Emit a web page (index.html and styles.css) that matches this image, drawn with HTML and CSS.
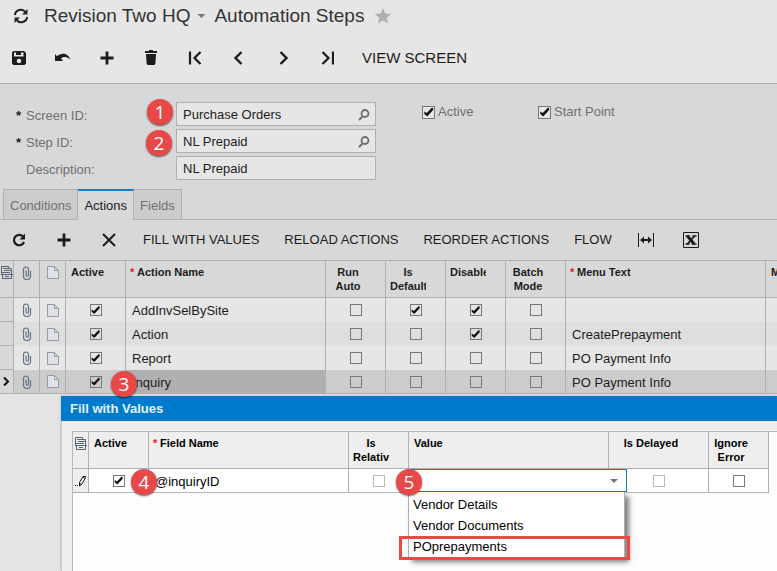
FILE: index.html
```html
<!DOCTYPE html>
<html lang="en">
<head>
    <meta charset="UTF-8">
    <meta name="viewport" content="width=device-width, initial-scale=1.0">
    <title>Automation Steps</title>
    <link rel="stylesheet" href="styles.css">
</head>
<body>

    <!-- Shared icons -->
    <svg class="sprite" aria-hidden="true">
        <symbol id="i-clip" viewBox="0 0 10 14">
            <path d="M1.500 3.500V10a3.500 3.500 0 0 0 7 0V5M1.500 4V3.500a2.500 2.500 0 0 1 5 0V9a1.200 1.200 0 0 1-2.400 0V4.500" fill="none" stroke="#667387" stroke-width="1.200"/>
        </symbol>
        <symbol id="i-page" viewBox="0 0 12 13">
            <path d="M.5.5h7l4 4v8H.5z" fill="#dfe2e8" stroke="#929aac"/>
            <path d="M7.500.5v4h4" fill="none" stroke="#929aac"/>
        </symbol>
        <symbol id="i-files" viewBox="0 0 12 14">
            <path d="M.5 8.500v-8h7v2h3v6zM1.500 8.500v4h9v-4" fill="none" stroke="#56647a"/>
            <path d="M2 2.500h6M3 4.500h8M0 6.500h4M4 6.500h5M0 8.500h12M4 10.500h4" stroke="#56647a"/>
        </symbol>
        <symbol id="i-search" viewBox="0 0 12 12">
            <circle cx="7" cy="4.500" r="3.500" fill="none" stroke="#6e6e6e" stroke-width="1.800"/>
            <path d="M4.500 7.500L1 11" stroke="#6e6e6e" stroke-width="2"/>
        </symbol>
        <symbol id="i-plus" viewBox="0 0 14 14">
            <path d="M7 .5v13M.5 7h13" stroke="#1c1c1c" stroke-width="2.800"/>
        </symbol>
    </svg>

    <header class="page-header">
        <div class="title-row">
            <button class="icon-button" aria-label="Refresh">
                <svg width="16" height="16" viewBox="0 0 16 16"><path d="M1.800 7A6 6 0 0 1 12.500 4.200M14.200 9A6 6 0 0 1 3.500 11.800" fill="none" stroke="#222" stroke-width="2"/><path d="M14.500 1v5.500H9zM1.500 15V9.500H7z" fill="#222"/></svg>
            </button>
            <button class="company">Revision Two HQ <span class="caret"></span></button>
            <h1>Automation Steps</h1>
            <button class="icon-button" aria-label="Favorite">
                <svg width="18" height="18" viewBox="0 0 18 18"><path d="M9 1l2.300 5.400 5.900.5-4.500 3.900 1.400 5.700L9 13.500l-5.100 3 1.400-5.700L.8 6.900l5.900-.5z" fill="#b0b0b0"/></svg>
            </button>
        </div>
        <div class="main-toolbar">
            <button class="icon-button" aria-label="Save">
                <svg width="14" height="14" viewBox="0 0 14 14"><path fill-rule="evenodd" d="M1.500 0H12l2 2v10.500L12.500 14h-11L0 12.500v-11zM2 1.500v4h9.500v-4H9V4H4V1.500zM7 7.700a2.300 2.300 0 1 0 0 4.600 2.300 2.300 0 0 0 0-4.600z" fill="#1c1c1c"/></svg>
            </button>
            <button class="icon-button" aria-label="Undo">
                <svg width="16" height="10" viewBox="0 0 16 10"><path d="M0 1l2 2.300C6-.3 13-.6 15.500 7c-2-2.800-6-4.500-9.500-1.500L8 8H0z" fill="#1c1c1c"/></svg>
            </button>
            <button class="icon-button" aria-label="Add">
                <svg width="14" height="14"><use href="#i-plus"/></svg>
            </button>
            <button class="icon-button" aria-label="Delete">
                <svg width="12" height="15" viewBox="0 0 12 15"><path d="M0 1h4V0h4v1h4v2H0zM1 4h10l-.6 9.500L9.500 15h-7l-.9-1.500z" fill="#1c1c1c"/></svg>
            </button>
            <button class="icon-button" aria-label="First">
                <svg width="14" height="14" viewBox="0 0 14 14"><path d="M2 .5v13M12.500 1L6.500 7l6 6" fill="none" stroke="#1c1c1c" stroke-width="2.200"/></svg>
            </button>
            <button class="icon-button" aria-label="Previous">
                <svg width="14" height="14" viewBox="0 0 14 14"><path d="M9.500 1l-6 6 6 6" fill="none" stroke="#1c1c1c" stroke-width="2.400"/></svg>
            </button>
            <button class="icon-button" aria-label="Next">
                <svg width="14" height="14" viewBox="0 0 14 14"><path d="M4.500 1l6 6-6 6" fill="none" stroke="#1c1c1c" stroke-width="2.400"/></svg>
            </button>
            <button class="icon-button" aria-label="Last">
                <svg width="14" height="14" viewBox="0 0 14 14"><path d="M13 .5v13M2.500 1l6 6-6 6" fill="none" stroke="#1c1c1c" stroke-width="2.200"/></svg>
            </button>
            <button class="text-button large">VIEW SCREEN</button>
        </div>
    </header>

    <main>
        <form class="step-form">
            <div class="fields">
                <label class="required" for="screen-id">Screen ID:</label>
                <div class="input-box">
                    <input type="text" id="screen-id" value="Purchase Orders">
                    <svg width="12" height="12"><use href="#i-search"/></svg>
                </div>
                <label class="required" for="step-id">Step ID:</label>
                <div class="input-box">
                    <input type="text" id="step-id" value="NL Prepaid">
                    <svg width="12" height="12"><use href="#i-search"/></svg>
                </div>
                <label for="description">Description:</label>
                <div class="input-box">
                    <input type="text" id="description" value="NL Prepaid">
                </div>
            </div>
            <div class="flags">
                <label><input type="checkbox" class="check big" checked>Active</label>
                <label><input type="checkbox" class="check big" checked>Start Point</label>
            </div>
        </form>

        <div class="tabs" role="tablist">
            <button class="tab" role="tab">Conditions</button>
            <button class="tab active" role="tab" aria-selected="true">Actions</button>
            <button class="tab" role="tab">Fields</button>
        </div>

        <div class="grid-toolbar">
            <button class="icon-button" aria-label="Refresh grid">
                <svg width="14" height="14" viewBox="0 0 14 14"><path d="M11 3.500A5.200 5.200 0 1 0 12 9" fill="none" stroke="#1c1c1c" stroke-width="2.200"/><path d="M13 .5v6H7.500z" fill="#1c1c1c"/></svg>
            </button>
            <button class="icon-button" aria-label="Add row">
                <svg width="14" height="14"><use href="#i-plus"/></svg>
            </button>
            <button class="icon-button" aria-label="Delete row">
                <svg width="14" height="14" viewBox="0 0 14 14"><path d="M1 1l12 12M13 1L1 13" stroke="#1c1c1c" stroke-width="2"/></svg>
            </button>
            <div class="text-buttons">
                <button class="text-button">FILL WITH VALUES</button>
                <button class="text-button">RELOAD ACTIONS</button>
                <button class="text-button">REORDER ACTIONS</button>
                <button class="text-button">FLOW</button>
            </div>
            <button class="icon-button" aria-label="Fit columns">
                <svg width="16" height="14" viewBox="0 0 16 14"><path d="M.5 0v14M15.500 0v14" stroke="#1c1c1c"/><path d="M4 7h8" stroke="#1c1c1c" stroke-width="2"/><path d="M2 7l4-3.500v7zM14 7l-4-3.500v7z" fill="#1c1c1c"/></svg>
            </button>
            <button class="icon-button" aria-label="Export to Excel">
                <svg width="16" height="16" viewBox="0 0 16 16"><path d="M.5.5h15v15H.5z" fill="none" stroke="#1c1c1c"/><path d="M4.500 4l6.500 8" stroke="#1c1c1c" stroke-width="3"/><path d="M11.500 4l-7 8" stroke="#1c1c1c" stroke-width="1.800"/><path d="M2.500 4h4M9.500 4h4M2.500 12h4M9 12h4.500" stroke="#1c1c1c" stroke-width="1.500"/></svg>
            </button>
        </div>

        <table class="grid">
            <colgroup>
                <col class="w-mark"><col class="w-icon"><col class="w-icon"><col class="w-check"><col class="w-text">
                <col class="w-check"><col class="w-check"><col class="w-check"><col class="w-check"><col class="w-text"><col>
            </colgroup>
            <thead>
                <tr>
                    <th class="icon-cell"><svg width="12" height="14"><use href="#i-files"/></svg></th>
                    <th class="icon-cell"><svg width="10" height="14"><use href="#i-clip"/></svg></th>
                    <th class="icon-cell"><svg width="12" height="13"><use href="#i-page"/></svg></th>
                    <th><div>Active</div></th>
                    <th><div class="required">Action Name</div></th>
                    <th class="center"><div>Run Auto</div></th>
                    <th class="center"><div>Is Default</div></th>
                    <th class="center"><div>Disabled</div></th>
                    <th class="center"><div>Batch Mode</div></th>
                    <th><div class="required">Menu Text</div></th>
                    <th class="cut"><div>M</div></th>
                </tr>
            </thead>
            <tbody>
                <tr>
                    <td class="mark"></td>
                    <td class="icon-cell"><svg width="10" height="14"><use href="#i-clip"/></svg></td>
                    <td class="icon-cell"><svg width="12" height="13"><use href="#i-page"/></svg></td>
                    <td class="center"><input type="checkbox" class="check" aria-label="Active" checked></td>
                    <td>AddInvSelBySite</td>
                    <td class="center"><input type="checkbox" class="check" aria-label="Run Auto"></td>
                    <td class="center"><input type="checkbox" class="check" aria-label="Is Default" checked></td>
                    <td class="center"><input type="checkbox" class="check" aria-label="Disabled" checked></td>
                    <td class="center"><input type="checkbox" class="check" aria-label="Batch Mode"></td>
                    <td></td>
                    <td class="cut"></td>
                </tr>
                <tr>
                    <td class="mark"></td>
                    <td class="icon-cell"><svg width="10" height="14"><use href="#i-clip"/></svg></td>
                    <td class="icon-cell"><svg width="12" height="13"><use href="#i-page"/></svg></td>
                    <td class="center"><input type="checkbox" class="check" aria-label="Active" checked></td>
                    <td>Action</td>
                    <td class="center"><input type="checkbox" class="check" aria-label="Run Auto"></td>
                    <td class="center"><input type="checkbox" class="check" aria-label="Is Default"></td>
                    <td class="center"><input type="checkbox" class="check" aria-label="Disabled" checked></td>
                    <td class="center"><input type="checkbox" class="check" aria-label="Batch Mode"></td>
                    <td>CreatePrepayment</td>
                    <td class="cut"></td>
                </tr>
                <tr>
                    <td class="mark"></td>
                    <td class="icon-cell"><svg width="10" height="14"><use href="#i-clip"/></svg></td>
                    <td class="icon-cell"><svg width="12" height="13"><use href="#i-page"/></svg></td>
                    <td class="center"><input type="checkbox" class="check" aria-label="Active" checked></td>
                    <td>Report</td>
                    <td class="center"><input type="checkbox" class="check" aria-label="Run Auto"></td>
                    <td class="center"><input type="checkbox" class="check" aria-label="Is Default"></td>
                    <td class="center"><input type="checkbox" class="check" aria-label="Disabled"></td>
                    <td class="center"><input type="checkbox" class="check" aria-label="Batch Mode"></td>
                    <td>PO Payment Info</td>
                    <td class="cut"></td>
                </tr>
                <tr class="selected">
                    <td class="mark"><svg width="7" height="9" viewBox="0 0 7 9"><path d="M1 .5l4 4-4 4" fill="none" stroke="#111" stroke-width="2"/></svg></td>
                    <td class="icon-cell"><svg width="10" height="14"><use href="#i-clip"/></svg></td>
                    <td class="icon-cell"><svg width="12" height="13"><use href="#i-page"/></svg></td>
                    <td class="center"><input type="checkbox" class="check" aria-label="Active" checked></td>
                    <td class="current">Inquiry</td>
                    <td class="center"><input type="checkbox" class="check" aria-label="Run Auto"></td>
                    <td class="center"><input type="checkbox" class="check" aria-label="Is Default"></td>
                    <td class="center"><input type="checkbox" class="check" aria-label="Disabled"></td>
                    <td class="center"><input type="checkbox" class="check" aria-label="Batch Mode"></td>
                    <td>PO Payment Info</td>
                    <td class="cut"></td>
                </tr>
            </tbody>
        </table>
    </main>

    <!-- Fill with Values window -->
    <section class="dialog" role="dialog" aria-labelledby="dialog-title">
        <h2 id="dialog-title">Fill with Values</h2>
        <div class="dialog-grid">
            <table class="grid">
                <colgroup>
                    <col class="w-edit"><col class="w-check"><col class="w-text"><col class="w-check"><col class="w-text"><col class="w-delay"><col class="w-check">
                </colgroup>
                <thead>
                    <tr>
                        <th class="icon-cell"><svg width="12" height="14"><use href="#i-files"/></svg></th>
                        <th><div>Active</div></th>
                        <th><div class="required">Field Name</div></th>
                        <th class="center"><div>Is Relativ</div></th>
                        <th><div>Value</div></th>
                        <th class="center"><div>Is Delayed</div></th>
                        <th class="center"><div>Ignore Error</div></th>
                    </tr>
                </thead>
                <tbody>
                    <tr>
                        <td class="mark"><svg width="12" height="12" viewBox="0 0 12 12"><path d="M4.500 7.500L8 1.500h2.500v1L7 9l-2.500 2z" fill="#fff" stroke="#111"/><path d="M8 2l2 1.500M4.500 8l2 1.500M0 10.500h1M2 10.500h1" stroke="#111"/></svg></td>
                        <td class="center"><input type="checkbox" class="check" aria-label="Active" checked></td>
                        <td>@inquiryID</td>
                        <td class="center"><input type="checkbox" class="check" aria-label="Is Relative" disabled></td>
                        <td class="value-cell">
                            <div class="combo">
                                <select aria-label="Value">
                                    <option></option>
                                </select>
                                <span class="caret"></span>
                                <ul class="options" role="listbox">
                                    <li role="option">Vendor Details</li>
                                    <li role="option">Vendor Documents</li>
                                    <li role="option">POprepayments<span class="highlight"></span></li>
                                </ul>
                            </div>
                        </td>
                        <td class="center"><input type="checkbox" class="check" aria-label="Is Delayed" disabled></td>
                        <td class="center"><input type="checkbox" class="check" aria-label="Ignore Error"></td>
                    </tr>
                </tbody>
            </table>
        </div>
    </section>

    <!-- Numbered callouts -->
    <span class="badge badge-1">1</span>
    <span class="badge badge-2">2</span>
    <span class="badge badge-3">3</span>
    <span class="badge badge-4">4</span>
    <span class="badge badge-5">5</span>

</body>
</html>
```

FILE: styles.css
```css
* {
    box-sizing: border-box;
}

html, body {
    height: 100%;
}

body {
    margin: 0;
    position: relative;
    overflow: hidden;
    background-color: #e4e4e4;
    color: #1c1c1c;
    font-family: "Liberation Sans", Arial, sans-serif;
    font-size: 13px;
    line-height: 16px;
}

button, input, select {
    font: inherit;
    color: inherit;
}

button {
    padding: 0;
    border: none;
    background: none;
    white-space: nowrap;
    cursor: pointer;
}

svg {
    display: block;
}

.sprite {
    position: absolute;
    width: 0;
    height: 0;
}

.icon-button {
    display: flex;
    align-items: center;
    justify-content: center;
    width: 22px;
    height: 22px;
    flex: none;
}

.caret {
    width: 8px;
    height: 4px;
    background-color: #777;
    clip-path: polygon(0 0, 100% 0, 50% 100%);
}

/* Header */
.page-header {
    background-color: #e6e6e6;
    border-bottom: 1px solid #b0b0b0;
}

.title-row {
    display: flex;
    align-items: center;
    height: 32px;
    padding: 0 10px;
    color: #333;
    font-size: 19px;
    line-height: 24px;
}

.company {
    display: flex;
    align-items: center;
    gap: 7px;
    margin: 0 9px 0 12px;
}

h1 {
    margin: 0 8px 0 0;
    font-size: 19px;
    font-weight: normal;
    white-space: nowrap;
}

.main-toolbar {
    display: flex;
    align-items: center;
    gap: 22px;
    height: 51px;
    padding: 0 8px;
}

.text-button.large {
    padding: 0 2px;
    font-size: 15px;
}

/* Form */
main {
    background-color: #d8d8d8;
}

.step-form {
    display: flex;
    gap: 46px;
    padding: 18px 0 9px 16px;
}

.fields {
    display: grid;
    grid-template-columns: 160px 200px;
    row-gap: 3px;
    align-items: center;
}

.fields label {
    padding: 3px 0 0 10px;
    color: #707070;
}

.fields label.required {
    padding-left: 0;
}

.fields label.required::before {
    content: "*";
    display: inline-block;
    width: 10px;
    color: #1c1c1c;
    font-weight: bold;
}

.input-box {
    display: flex;
    align-items: center;
    height: 24px;
    padding: 1px 5px 0 6px;
    border: 1px solid #b0b0b0;
    background-color: #e6e6e6;
}

.input-box input {
    flex: 1;
    min-width: 0;
    padding: 0;
    border: none;
    outline: none;
    background: none;
}

.flags {
    display: flex;
    padding-top: 2px;
}

.flags label {
    display: flex;
    align-items: center;
    gap: 3px;
    width: 116px;
    height: 16px;
    color: #707070;
}

/* Checkboxes */
.check {
    appearance: none;
    display: block;
    width: 12px;
    height: 12px;
    margin: 0 auto;
    border: 1px solid #777;
    background: none;
}

.check.big {
    width: 13px;
    height: 13px;
    margin: 0;
    background-color: #e6e6e6;
}

.check:disabled {
    border-color: #bbb;
}

.check:checked::before {
    content: "";
    display: block;
    height: 100%;
    background-color: #111;
    clip-path: polygon(12% 45%, 34% 60%, 82% 10%, 92% 18%, 92% 32%, 38% 90%, 12% 68%);
}

/* Tabs */
.tabs {
    display: flex;
    padding-left: 3px;
    height: 31px;
    border-bottom: 1px solid #b0b0b0;
}

.tab {
    height: 30px;
    padding: 2px 6px 0;
    border: 1px solid #b0b0b0;
    border-width: 1px 1px 0 1px;
    background-color: #ccc;
    color: #707070;
}

.tab + .tab {
    border-left: none;
}

.tab.active {
    height: 31px;
    padding-top: 0;
    border-top: 2px solid #1a7fc0;
    background-color: #d8d8d8;
    color: #1c1c1c;
}

/* Grid toolbar */
.grid-toolbar {
    display: flex;
    align-items: center;
    gap: 23px;
    height: 40px;
    padding-left: 8px;
}

.text-buttons {
    display: flex;
    align-items: center;
    gap: 25px;
}

/* Grids */
.grid {
    width: 100%;
    table-layout: fixed;
    border-collapse: separate;
    border-spacing: 0;
    border-top: 1px solid #b0b0b0;
}

.w-mark {
    width: 14px;
}

.w-edit {
    width: 16px;
}

.w-icon {
    width: 26px;
}

.w-check {
    width: 60px;
}

.w-delay {
    width: 100px;
}

.w-text {
    width: 200px;
}

.grid th {
    height: 37px;
    padding: 4px 19px 0 4px;
    border-right: 1px solid #b0b0b0;
    border-bottom: 1px solid #b0b0b0;
    font-size: 11px;
    line-height: 14px;
    text-align: left;
    vertical-align: top;
}

.grid th div {
    padding-left: 1px;
    overflow: hidden;
}

.grid th.center div {
    padding-left: 0;
    text-align: center;
}

.grid th .required {
    padding-left: 0;
}

.grid th .required::before {
    content: "*";
    display: inline-block;
    width: 7px;
    color: #e02020;
}

.grid td {
    height: 24px;
    padding: 2px 6px 0;
    border-right: 1px solid #b0b0b0;
    background-color: #e6e6e6;
    white-space: nowrap;
}

.grid tr:nth-child(even) td {
    background-color: #dedede;
}

.grid td.center {
    padding: 0;
}

/* Last column runs off the right edge */
.grid .cut {
    padding-right: 0;
    border-right: none;
}

.grid th.cut div {
    overflow: visible;
}

.grid td.icon-cell {
    padding: 0;
}

.grid th.icon-cell {
    padding: 5px 0 0;
}

.icon-cell svg,
.mark svg {
    margin: 0 auto;
}

.grid tbody td.mark,
.grid tbody tr:nth-child(even) td.mark {
    padding: 0;
    border-bottom: 1px solid #b0b0b0;
    background-color: #d8d8d8;
}

.grid tbody tr.selected td {
    border-bottom: 1px solid #b0b0b0;
    background-color: #ccc;
}

.grid tbody tr.selected td.current {
    background-color: #b0b0b0;
}

/* Dialog */
.dialog {
    position: absolute;
    top: 396px;
    right: 0;
    bottom: 0;
    left: 61px;
    display: flex;
    flex-direction: column;
    border-left: 1px solid #ccc;
    background-color: #eee;
    box-shadow: 0 0 3px rgba(0, 0, 0, 0.2);
    color: #000;
}

.dialog h2 {
    margin: 0 0 10px -1px;
    padding: 5px 9px 4px;
    background-color: #007acc;
    color: #e4f1fa;
    font-size: 13px;
    line-height: 16px;
}

.dialog-grid {
    flex: 1;
    margin-left: 10px;
    border-top: 1px solid #b8b8b8;
    border-left: 1px solid #b8b8b8;
    background-color: #fdfdfd;
}

.dialog-grid .grid {
    width: 696px;
    border-top: none;
}

.dialog-grid .grid th {
    background-color: #eee;
}

.dialog-grid .grid td {
    border-bottom: 1px solid #b8b8b8;
    background-color: #fff;
}

.dialog-grid .grid tbody td.mark {
    background-color: #eee;
}

.grid td.value-cell {
    padding: 0;
}

/* Value drop-down, wider than its column */
.combo {
    position: relative;
    height: 23px;
}

.combo select {
    position: absolute;
    top: 0;
    left: -1px;
    width: 219px;
    height: 23px;
    appearance: none;
    border: 1px solid #1a7fc0;
    border-radius: 0;
    background-color: #fff;
    outline: none;
}

.combo .caret {
    position: absolute;
    top: 10px;
    left: 201px;
}

.options {
    position: absolute;
    top: 23px;
    left: -1px;
    width: 217px;
    margin: 0;
    padding: 2px 0 0;
    border: 1px solid #b0b0b0;
    border-top: none;
    background-color: #fff;
    box-shadow: 4px 4px 5px rgba(0, 0, 0, 0.5);
    list-style: none;
}

.options li {
    position: relative;
    height: 21px;
    padding-left: 4px;
    line-height: 21px;
}

.highlight {
    position: absolute;
    top: 0;
    right: -6px;
    bottom: -3px;
    left: -10px;
    border: 3px solid #e94b42;
}

/* Callouts */
.badge {
    position: absolute;
    width: 26px;
    height: 26px;
    border-radius: 50%;
    background-color: #e84848;
    box-shadow: 0 1px 2px rgba(0, 0, 0, 0.6);
    color: #fff;
    font-family: "Open Sans", sans-serif;
    font-size: 19px;
    line-height: 26px;
    text-align: center;
}

.badge-1 {
    top: 99px;
    left: 147px;
}

.badge-2 {
    top: 130px;
    left: 146px;
}

.badge-3 {
    top: 371px;
    left: 111px;
}

.badge-4 {
    top: 469px;
    left: 131px;
}

.badge-5 {
    top: 469px;
    left: 396px;
}
```
